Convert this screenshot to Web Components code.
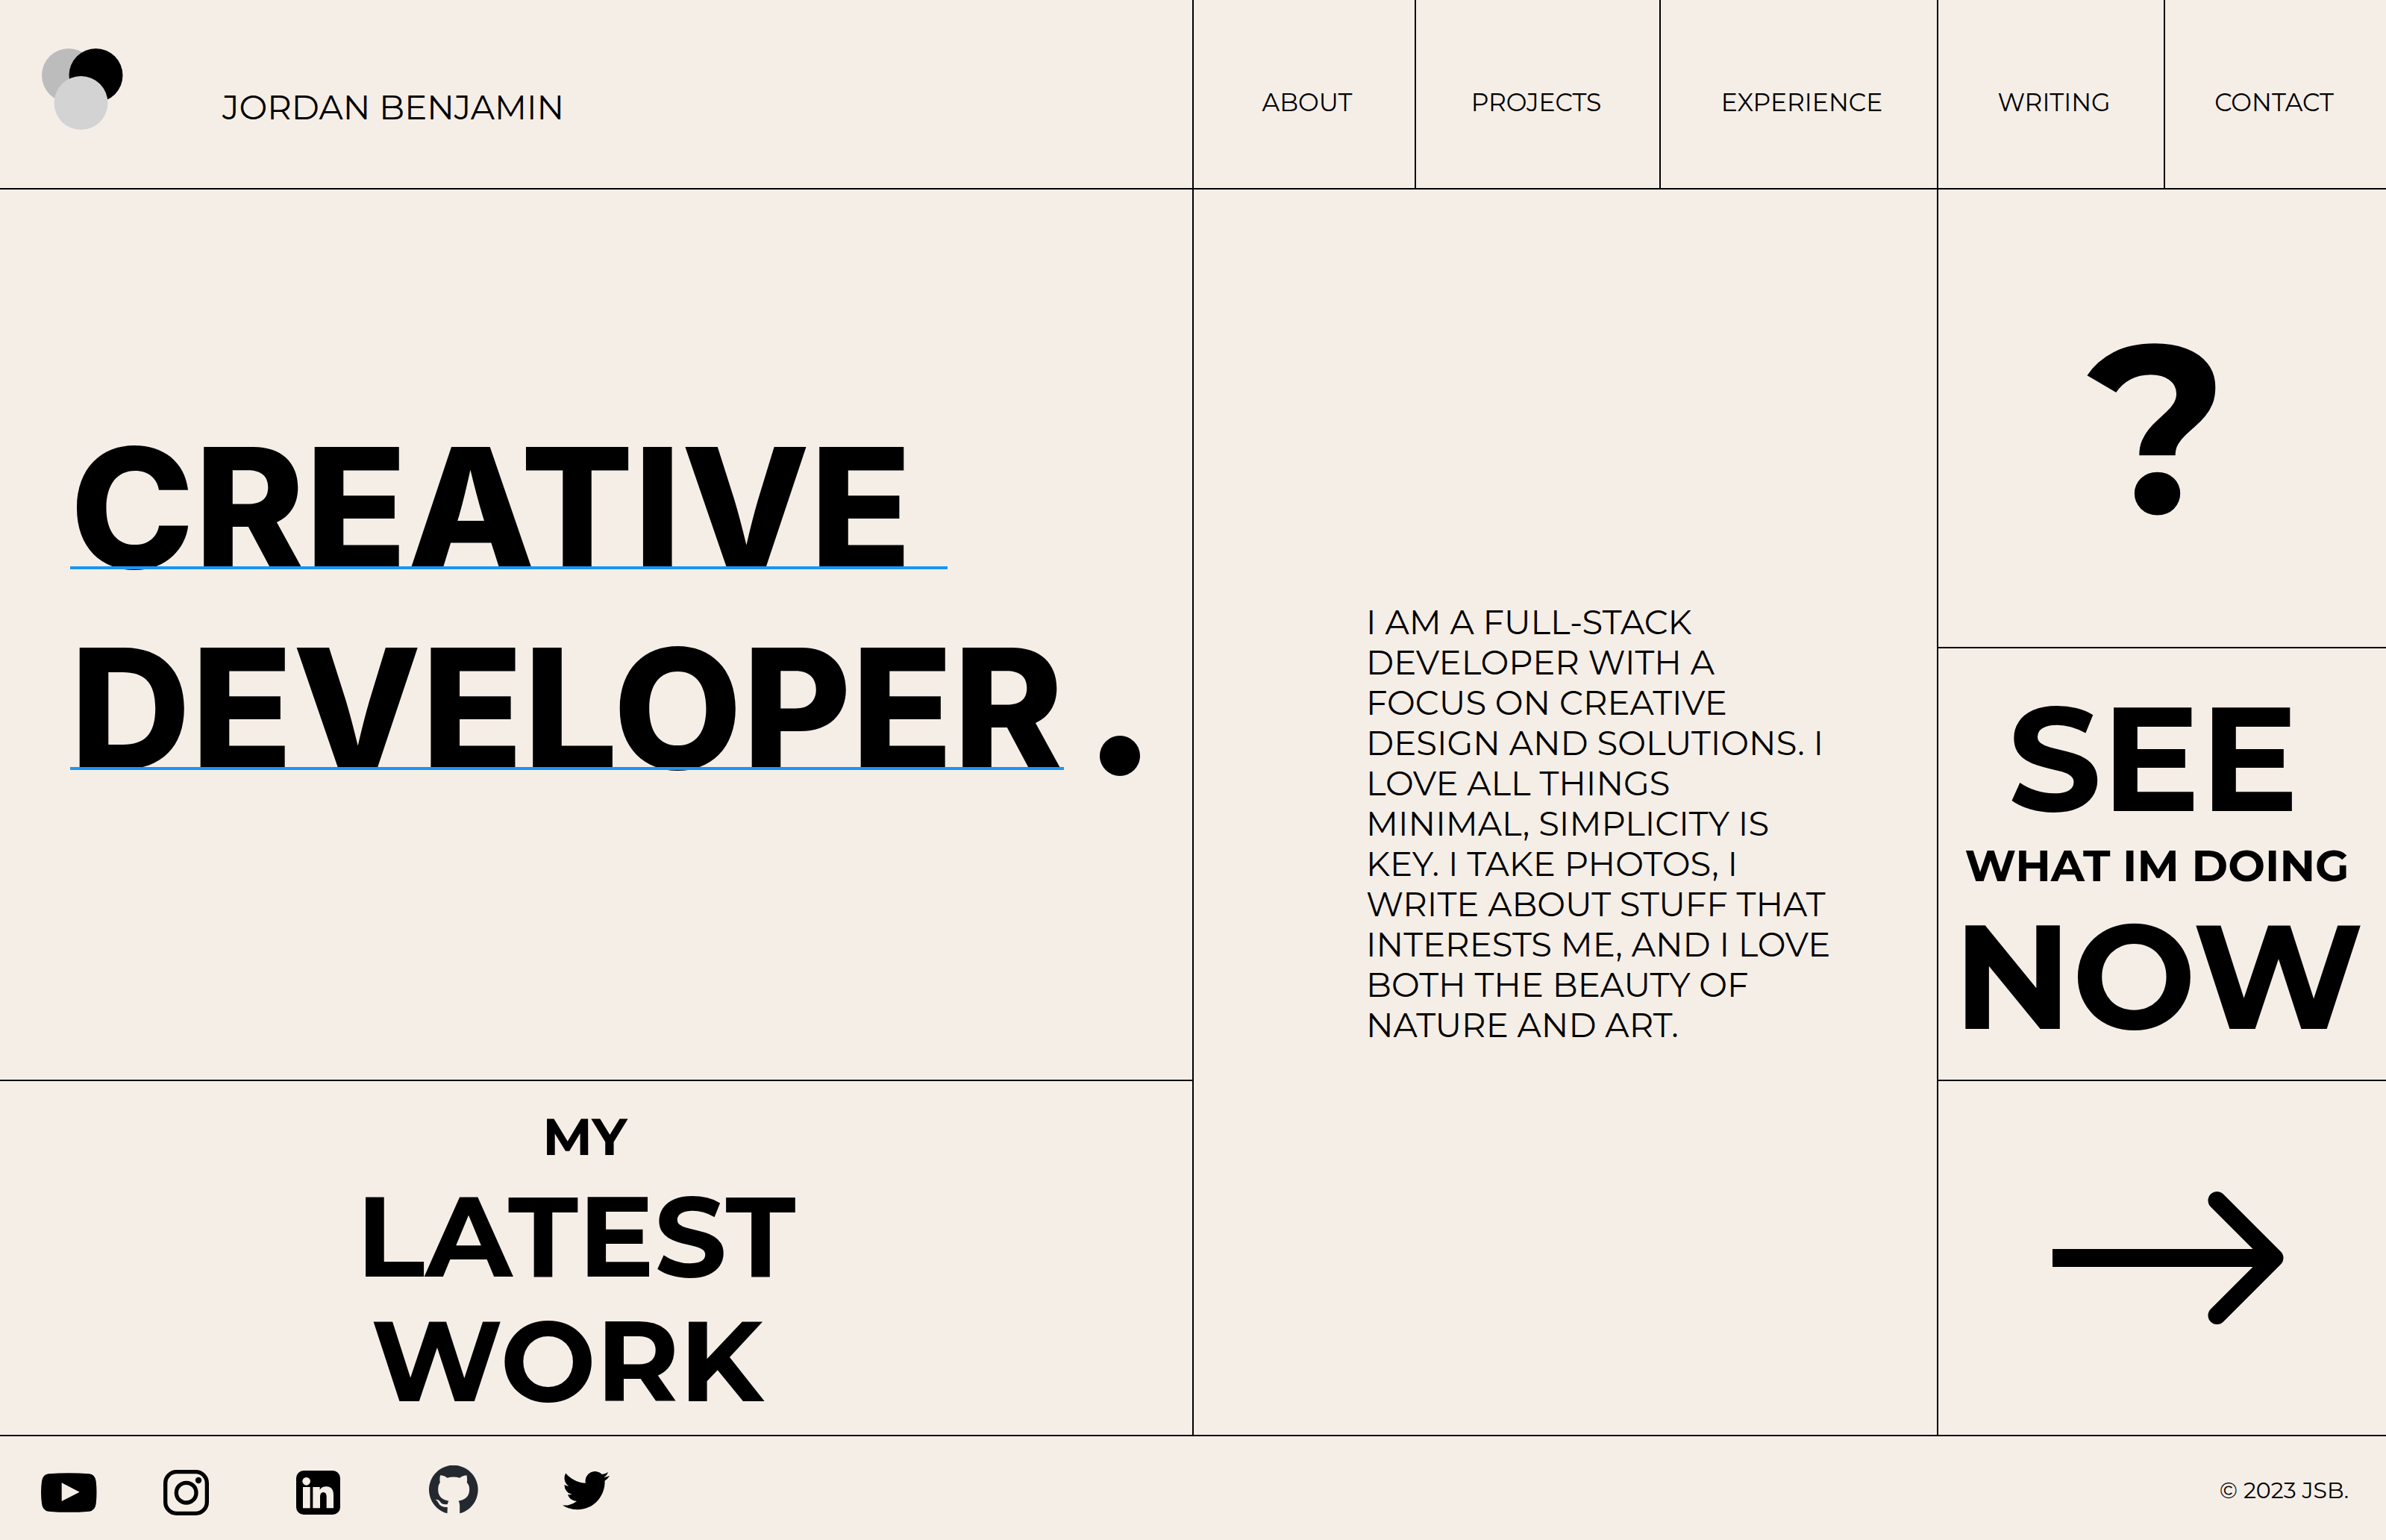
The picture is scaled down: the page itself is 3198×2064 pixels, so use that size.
<!DOCTYPE html>
<html lang="en">
<head>
<meta charset="utf-8">
<meta name="viewport" content="width=device-width, initial-scale=1">
<title>Jordan Benjamin</title>
<style>
  body {
    margin: 0;
    background: #f5eee7;
    color: #000;
    font-family: Montserrat, "Open Sans", sans-serif;
  }
</style>
</head>
<body>
<portfolio-page></portfolio-page>

<template id="portfolio-page">
  <style>
    :host {
      --rule: 2px solid #000;
      display: grid;
      grid-template-rows: 254fr 1669fr 141fr;
      min-height: 100vh;
    }
    main {
      display: grid;
      grid-template-columns: 1598fr 998fr 602fr;
    }
    .left { display: grid; grid-template-rows: 1193fr 476fr; }
    .right { display: grid; grid-template-rows: 613fr 580fr 476fr; }
  </style>
  <site-header></site-header>
  <main>
    <div class="left">
      <hero-title></hero-title>
      <latest-work></latest-work>
    </div>
    <about-text>I AM A FULL-STACK DEVELOPER WITH A FOCUS ON CREATIVE DESIGN AND SOLUTIONS. I LOVE ALL THINGS MINIMAL, SIMPLICITY IS KEY. I TAKE PHOTOS, I WRITE ABOUT STUFF THAT INTERESTS ME, AND I LOVE BOTH THE BEAUTY OF NATURE AND ART.</about-text>
    <div class="right">
      <question-tile>?</question-tile>
      <see-now></see-now>
      <arrow-tile></arrow-tile>
    </div>
  </main>
  <site-footer></site-footer>
</template>

<template id="site-header">
  <style>
    :host {
      display: grid;
      grid-template-columns: 1598fr 1600fr;
      border-bottom: var(--rule);
    }
    .brand {
      display: flex;
      align-items: center;
      gap: 133px;
      padding-left: 55px;
    }
    .brand svg { width: 110px; height: 110px; margin-bottom: 12px; }
    .brand span { font-size: 45px; line-height: 54px; padding-top: 36px; }
    nav { display: grid; grid-template-columns: 298fr 328fr 372fr 304fr 298fr; }
  </style>
  <div class="brand">
    <svg viewBox="0 0 110 110" aria-hidden="true">
      <circle cx="37" cy="36" r="36" fill="#bcbcbc"/>
      <circle cx="73.500" cy="36" r="36" fill="#000"/>
      <circle cx="53.500" cy="73" r="36" fill="#d3d3d3"/>
    </svg>
    <span>JORDAN BENJAMIN</span>
  </div>
  <nav>
    <nav-cell href="#about" lead>ABOUT</nav-cell>
    <nav-cell href="#projects">PROJECTS</nav-cell>
    <nav-cell href="#experience" lead>EXPERIENCE</nav-cell>
    <nav-cell href="#writing" lead>WRITING</nav-cell>
    <nav-cell href="#contact">CONTACT</nav-cell>
  </nav>
</template>

<template id="nav-cell">
  <style>
    :host { display: grid; border-left: var(--rule); }
    a {
      display: flex;
      align-items: center;
      justify-content: center;
      padding: 22px 4px 0 0;
      font-size: 33px;
      line-height: 40px;
      color: inherit;
      text-decoration: none;
    }
    :host([lead]) a { padding-left: 12px; }
  </style>
  <a><slot></slot></a>
</template>

<template id="hero-title">
  <style>
    :host { display: flex; align-items: center; padding: 0 0 72px 94px; }
    h1 {
      margin: 0;
      font: 800 224px/269px Inter, sans-serif;
    }
    .line {
      position: relative;
      display: block;
      width: fit-content;
    }
    .line::after {
      content: "";
      position: absolute;
      left: 0;
      right: 0;
      top: 213px;
      height: 4px;
      background: #1a95f7;
    }
    .trail { padding-right: 48px; }
    .row { display: flex; align-items: flex-end; gap: 48px; }
    .dot {
      width: 54px;
      height: 54px;
      margin-bottom: 44px;
      border-radius: 50%;
      background: #000;
    }
  </style>
  <h1>
    <span class="line trail">CREATIVE</span>
    <span class="row"><span class="line">DEVELOPER</span><span class="dot"></span></span>
  </h1>
</template>

<template id="latest-work">
  <style>
    :host {
      display: flex;
      flex-direction: column;
      align-items: center;
      justify-content: center;
      gap: 8px;
      padding: 16px 54px 0 0;
      border-top: var(--rule);
      font-weight: 700;
    }
    span { display: block; font-size: 70px; line-height: 84px; padding-left: 24px; }
    h2 { margin: 0; font-size: 152px; line-height: 167px; text-align: center; }
    h2 span { font-size: inherit; line-height: inherit; padding: 0 24px 0 0; }
  </style>
  <span>MY</span>
  <h2>LATEST<span>WORK</span></h2>
</template>

<template id="about-text">
  <style>
    :host {
      display: flex;
      align-items: center;
      padding: 30px 0 0 231px;
      border-left: var(--rule);
    }
    p { margin: 0; max-width: 632px; font-size: 45px; line-height: 54px; }
  </style>
  <p><slot></slot></p>
</template>

<template id="question-tile">
  <style>
    :host {
      display: flex;
      align-items: center;
      justify-content: center;
      padding: 24px 12px 0 0;
      border-left: var(--rule);
      font-size: 320px;
      line-height: 320px;
      font-weight: 700;
    }
  </style>
  <slot></slot>
</template>

<template id="see-now">
  <style>
    :host {
      display: flex;
      flex-direction: column;
      align-items: center;
      justify-content: center;
      gap: 8px;
      padding: 8px 10px 0 0;
      border-left: var(--rule);
      border-top: var(--rule);
      font-weight: 700;
    }
    .big { font-size: 197px; line-height: 200px; }
    .see { padding-right: 14px; }
    .small { font-size: 59px; line-height: 72px; padding: 0 4px 4px 0; white-space: nowrap; }
  </style>
  <span class="big see">SEE</span>
  <span class="small">WHAT IM DOING</span>
  <span class="big">NOW</span>
</template>

<template id="arrow-tile">
  <style>
    :host {
      display: grid;
      border-left: var(--rule);
      border-top: var(--rule);
    }
    a {
      display: flex;
      align-items: center;
      justify-content: center;
      padding-left: 16px;
      color: inherit;
    }
    svg { width: 310px; height: 178px; }
  </style>
  <a href="#work" aria-label="See what I'm doing now">
    <svg viewBox="0 0 310 178" fill="none" stroke="currentColor" stroke-width="24" aria-hidden="true">
      <path d="M0 89H296"/>
      <path d="M220.500 12L297.500 89L220.500 166" stroke-linecap="round" stroke-linejoin="round"/>
    </svg>
  </a>
</template>

<template id="site-footer">
  <style>
    :host {
      display: flex;
      align-items: center;
      justify-content: space-between;
      padding: 0 50px 0 55px;
      border-top: var(--rule);
    }
    nav {
      display: grid;
      grid-template-columns: 164px 178px 178px 179px auto;
      align-items: center;
      padding-top: 12px;
    }
    a { display: flex; color: inherit; }
    small { font-size: 30px; line-height: 36px; padding-top: 6px; }
  </style>
  <nav aria-label="Social">
    <a href="#youtube" aria-label="YouTube">
      <svg width="75" height="53" viewBox="166 222 225 159" fill="currentColor">
        <path fill-rule="evenodd" d="M196 226Q278 219 360 226Q384 229 387 256Q392 301 387 346Q384 374 360 377Q278 384 196 377Q172 374 169 346Q163 301 169 256Q172 229 196 226ZM249 262V336L321 299Z"/>
      </svg>
    </a>
    <a href="#instagram" aria-label="Instagram">
      <svg width="61" height="61" viewBox="0 0 183 183" fill="none" stroke="currentColor" stroke-width="16">
        <rect x="8" y="8" width="167" height="167" rx="45"/>
        <circle cx="92" cy="92" r="40"/>
        <circle cx="141" cy="42" r="12.500" fill="currentColor" stroke="none"/>
      </svg>
    </a>
    <a href="#linkedin" aria-label="LinkedIn">
      <svg width="59" height="59" viewBox="0 0 177 177">
        <rect width="177" height="177" rx="30" fill="currentColor"/>
        <g fill="#f5eee7">
          <circle cx="41" cy="43" r="16"/>
          <rect x="27" y="66" width="29" height="85"/>
          <path d="M67 66H95V77Q103 64 121 64Q150 64 150 99V151H122V105Q122 87 109 87Q96 87 96 105V151H67Z"/>
        </g>
      </svg>
    </a>
    <a href="#github" aria-label="GitHub">
      <svg width="66" height="73" viewBox="404.500 191 198 219" fill="#24292f">
        <path d="M478 384A98.500 98.500 0 1 1 528 384V352Q528 340 523 334C545 331 567 320 567 288C567 276 564 267 557 260Q559 245 556 231Q545 231 528 241Q503 234 478 241Q462 231 450 231Q446 245 449 260Q441 270 441 288C441 320 462 331 484 334Q480 338 479 347Q458 350 450 338Q442 326 431 329Q439 333 442 341Q450 360 479 359Z"/>
      </svg>
    </a>
    <a href="#twitter" aria-label="Twitter">
      <svg width="63" height="57" viewBox="0 2.250 24 21.700" fill="currentColor">
        <path d="M23.953 4.570a10 10 0 01-2.825.775 4.958 4.958 0 002.163-2.723c-.951.555-2.005.959-3.127 1.184a4.920 4.920 0 00-8.384 4.482C7.690 8.095 4.067 6.130 1.640 3.162a4.822 4.822 0 00-.666 2.475c0 1.710.870 3.213 2.188 4.096a4.904 4.904 0 01-2.228-.616v.060a4.923 4.923 0 003.946 4.827 4.996 4.996 0 01-2.212.085 4.936 4.936 0 004.604 3.417 9.867 9.867 0 01-6.102 2.105c-.390 0-.779-.023-1.170-.067a13.995 13.995 0 007.557 2.209c9.053 0 13.998-7.496 13.998-13.985 0-.210 0-.420-.015-.630A9.935 9.935 0 0024 4.590z"/>
      </svg>
    </a>
  </nav>
  <small>© 2023 JSB.</small>
</template>

<script>
  class TemplateElement extends HTMLElement {
    constructor() {
      super();
      const template = document.getElementById(this.localName);
      this.attachShadow({ mode: 'open' }).append(template.content.cloneNode(true));
    }
  }

  class NavCell extends TemplateElement {
    connectedCallback() {
      this.shadowRoot.querySelector('a').href = this.getAttribute('href');
    }
  }

  customElements.define('nav-cell', NavCell);
  for (const name of [
    'site-header', 'hero-title', 'latest-work', 'about-text',
    'question-tile', 'see-now', 'arrow-tile', 'site-footer', 'portfolio-page'
  ]) {
    customElements.define(name, class extends TemplateElement {});
  }
</script>
</body>
</html>
